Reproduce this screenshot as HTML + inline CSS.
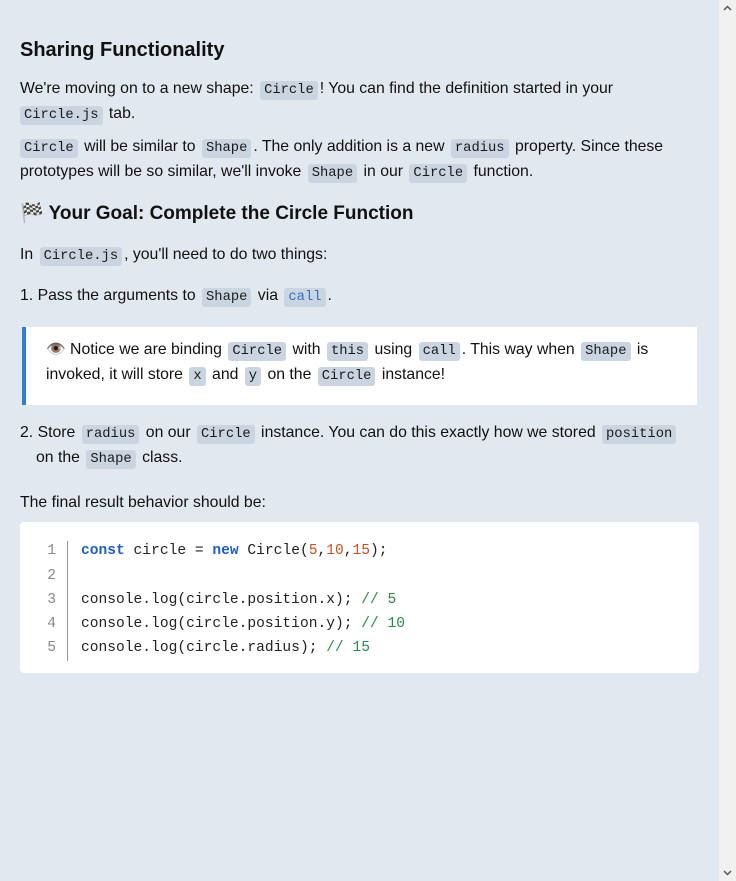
<!DOCTYPE html>
<html><head><meta charset="utf-8"><style>
html,body{margin:0;padding:0}
body{width:736px;height:881px;background:#e2e8f0;position:relative;overflow:hidden;font-family:"Segoe UI","Liberation Sans","Noto Sans CJK JP",sans-serif;font-size:15.8px;color:#111}
.l{position:absolute;white-space:nowrap;line-height:20px;height:20px}
code{font-family:"Liberation Mono","DejaVu Sans Mono",monospace;font-size:13.8px;background:#cbd5e1;border-radius:3px;padding:2px 4px;margin:0 2px;color:#1a1a1a}
code.b{color:#2f6fbf}
.sb{position:absolute;right:0;top:0;width:17px;height:881px;background:#f0f0f0}
.q{position:absolute;left:22px;top:327px;width:675px;height:78px;background:#fff;border-left:4px solid #2f80d4;box-sizing:border-box}
.cb{position:absolute;left:20px;top:522px;width:679px;height:151px;background:#fff;border-radius:4px}
.sep{position:absolute;left:67px;top:541px;width:1px;height:120px;background:#999}
.n{position:absolute;left:40px;width:16px;text-align:right;font-family:"Liberation Mono",monospace;font-size:14.6px;color:#888;line-height:20px}
.c{position:absolute;left:81px;font-family:"Liberation Mono",monospace;font-size:14.6px;color:#222;line-height:20px;white-space:pre}
.k{color:#1f5fbf;font-weight:bold}.o{color:#c8501c}.g{color:#2a8a4a}
</style></head><body>
<div class="l" style="left:20px;top:38px;font-size:20px;font-weight:bold;height:24px;line-height:24px">Sharing Functionality</div>
<div class="l" style="left:20px;top:79px">We're moving on to a new shape: <code>Circle</code>! You can find the definition started in your</div>
<div class="l" style="left:18px;top:104px"><code>Circle.js</code> tab.</div>
<div class="l" style="left:18px;top:137px"><code>Circle</code> will be similar to <code>Shape</code>. The only addition is a new <code>radius</code> property. Since these</div>
<div class="l" style="left:20px;top:162px">prototypes will be so similar, we'll invoke <code>Shape</code> in our <code>Circle</code> function.</div>
<div class="l" style="left:20px;top:202px;font-size:19px;font-weight:bold;height:24px;line-height:24px">🏁 Your Goal: Complete the Circle Function</div>
<div class="l" style="left:20px;top:245px">In <code>Circle.js</code>, you'll need to do two things:</div>
<div class="l" style="left:20px;top:286px">1. Pass the arguments to <code>Shape</code> via <code class="b">call</code>.</div>
<div class="q"></div>
<div class="l" style="left:46px;top:340px">👁️ Notice we are binding <code>Circle</code> with <code>this</code> using <code>call</code>. This way when <code>Shape</code> is</div>
<div class="l" style="left:46px;top:365px">invoked, it will store <code>x</code> and <code>y</code> on the <code>Circle</code> instance!</div>
<div class="l" style="left:20px;top:423px">2. Store <code>radius</code> on our <code>Circle</code> instance. You can do this exactly how we stored <code>position</code></div>
<div class="l" style="left:36px;top:448px">on the <code>Shape</code> class.</div>
<div class="l" style="left:20px;top:493px">The final result behavior should be:</div>
<div class="cb"></div>
<div class="sep"></div>
<div class="n" style="top:541px">1</div><div class="n" style="top:566px">2</div><div class="n" style="top:590px">3</div><div class="n" style="top:614px">4</div><div class="n" style="top:638px">5</div>
<div class="c" style="top:541px"><span class="k">const</span> circle = <span class="k">new</span> Circle(<span class="o">5</span>,<span class="o">10</span>,<span class="o">15</span>);</div>
<div class="c" style="top:590px">console.log(circle.position.x); <span class="g">// 5</span></div>
<div class="c" style="top:614px">console.log(circle.position.y); <span class="g">// 10</span></div>
<div class="c" style="top:638px">console.log(circle.radius); <span class="g">// 15</span></div>
<div class="sb"><svg width="17" height="881" style="position:absolute;left:0;top:0"><path d="M5 10 L8.5 6.5 L12 10" fill="none" stroke="#555" stroke-width="1.5"/><path d="M5 871 L8.5 874.5 L12 871" fill="none" stroke="#555" stroke-width="1.5"/></svg></div>
</body></html>
